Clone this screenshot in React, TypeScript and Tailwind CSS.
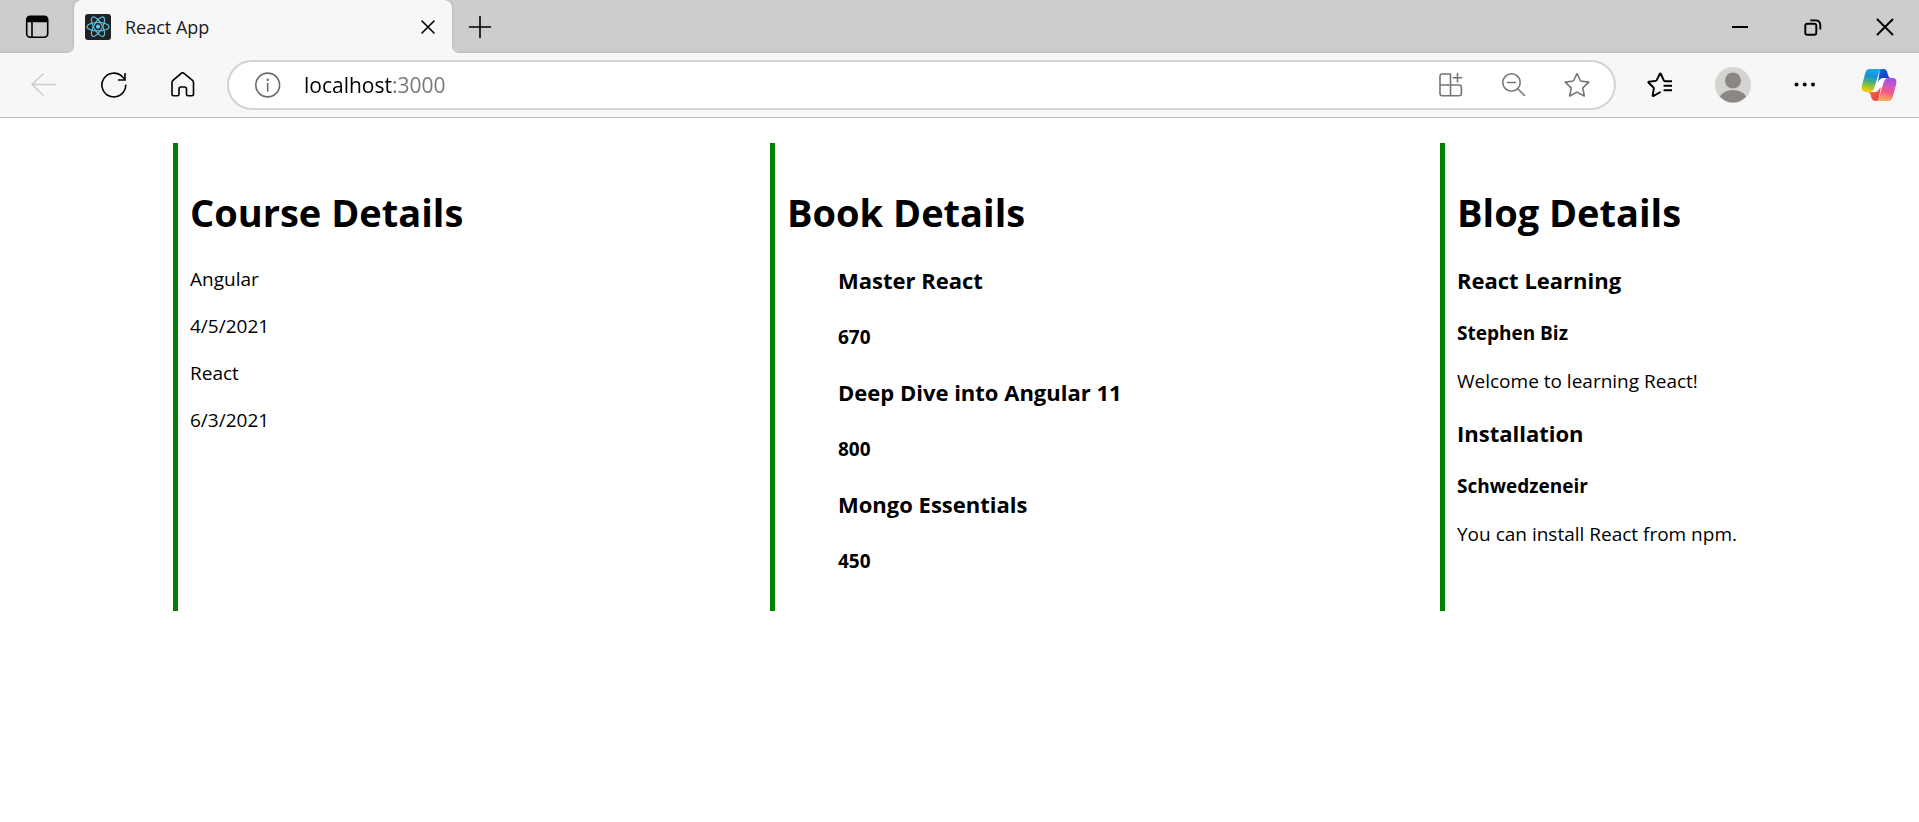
import React from "react";

type IconProps = { className?: string; children: React.ReactNode; size?: number };

function Icon({ className = "size-[26px]", children, size = 26 }: IconProps) {
  return (
    <svg
      className={className}
      viewBox={`0 0 ${size} ${size}`}
      fill="none"
      stroke="currentColor"
      strokeWidth="1.6"
      strokeLinecap="round"
      strokeLinejoin="round"
      aria-hidden="true"
    >
      {children}
    </svg>
  );
}

const courses = [
  { name: "Angular", date: "4/5/2021" },
  { name: "React", date: "6/3/2021" },
];

const books = [
  { name: "Master React", price: 670 },
  { name: "Deep Dive into Angular 11", price: 800 },
  { name: "Mongo Essentials", price: 450 },
];

const blogs = [
  { title: "React Learning", author: "Stephen Biz", text: "Welcome to learning React!" },
  { title: "Installation", author: "Schwedzeneir", text: "You can install React from npm." },
];

function ReactLogo() {
  return (
    <svg className="size-[26px]" viewBox="0 0 26 26" aria-hidden="true">
      <rect width="26" height="26" rx="3" fill="#222222" />
      <g fill="none" stroke="#5cc8e4" strokeWidth="1.1">
        <ellipse cx="13" cy="12.7" rx="11" ry="4.2" />
        <ellipse cx="13" cy="12.7" rx="11" ry="4.2" transform="rotate(60 13 12.7)" />
        <ellipse cx="13" cy="12.7" rx="11" ry="4.2" transform="rotate(120 13 12.7)" />
      </g>
      <circle cx="13" cy="12.7" r="2.1" fill="#5cc8e4" />
    </svg>
  );
}

function CopilotLogo() {
  return (
    <svg className="size-9" viewBox="0 0 36 36" aria-hidden="true">
      <defs>
        <linearGradient id="cp-left" x1="0.55" y1="0" x2="0.4" y2="1">
          <stop offset="0" stopColor="#1fa9f2" />
          <stop offset="0.3" stopColor="#1191dc" />
          <stop offset="0.55" stopColor="#3fae84" />
          <stop offset="0.8" stopColor="#a9c726" />
          <stop offset="1" stopColor="#fccb05" />
        </linearGradient>
        <linearGradient id="cp-right" x1="0.6" y1="0" x2="0.4" y2="1">
          <stop offset="0" stopColor="#a14ee8" />
          <stop offset="0.3" stopColor="#c957c4" />
          <stop offset="0.58" stopColor="#f2588a" />
          <stop offset="1" stopColor="#ffb057" />
        </linearGradient>
        <linearGradient id="cp-top" x1="0" y1="0" x2="1" y2="1">
          <stop offset="0" stopColor="#1668dd" />
          <stop offset="0.6" stopColor="#0d3fca" />
          <stop offset="1" stopColor="#2467e8" />
        </linearGradient>
        <linearGradient id="cp-bottom" x1="0" y1="0" x2="1" y2="1">
          <stop offset="0" stopColor="#f9922f" />
          <stop offset="0.6" stopColor="#ee4f42" />
          <stop offset="1" stopColor="#e2365a" />
        </linearGradient>
      </defs>
      <path d="M19.500 10H25l-7 16H11z" fill="#ffffff" />
      <path d="M19 2h3.500c2 0 3 1 3.600 3l1 3.300c.4 1.600 1.300 2.500 2.900 2.700h-7c-2.300 0-3.700.3-5 2.500L17 16z" fill="url(#cp-top)" />
      <path d="M17 34h-2.500c-2.300 0-3.500-1.200-4.100-3.200l-.9-3C9 26 8 25 6 25h7.200c2.500 0 3.600-.6 4.500-2.500L20 20z" fill="url(#cp-bottom)" />
      <path d="M8.500 2H22c-2.200 0-3.300 1.400-4 3.600L13.500 20c-1 3.400-2.200 5-5.300 5H5C1.200 25 0 22.500 1 18.500L4 7c1-3.500 2-5 4.500-5z" fill="url(#cp-left)" />
      <path d="M27.500 34H14c2.200 0 3.300-1.400 4-3.600L22.500 16c1-3.400 2.200-5 5.300-5h3.500c3.800 0 4.700 2.500 3.800 6.500L32 29c-1 3.500-2 5-4.500 5z" fill="url(#cp-right)" />
    </svg>
  );
}

function TabStrip() {
  return (
    <div className="flex h-[53px] items-stretch overflow-hidden bg-[#cdcdcd] shadow-[inset_0_-2px_2px_-1px_#bababa]">
      <button aria-label="Tab actions menu" className="flex w-[74px] items-center justify-center">
        <Icon>
          <rect x="2.700" y="2.200" width="21" height="21" rx="3.500" />
          <path d="M3.500 4.500Q3.500 3 5 3H21.500q1.500 0 1.500 1.500V7.500H3.500z" fill="currentColor" />
          <path d="M8 7v16" />
        </Icon>
      </button>
      <div className="relative flex w-[378px] items-center rounded-t-lg bg-[#f7f7f7] pr-[14px] pl-[11px] shadow-[0_0_3px_#a8a8a8]">
        <svg className="absolute bottom-0 -left-2 size-2" viewBox="0 0 8 8" aria-hidden="true">
          <path d="M8 0v8H0q8 0 8-8z" fill="#f7f7f7" />
        </svg>
        <svg className="absolute -right-2 bottom-0 size-2" viewBox="0 0 8 8" aria-hidden="true">
          <path d="M0 0v8h8Q0 8 0 0z" fill="#f7f7f7" />
        </svg>
        <ReactLogo />
        <span className="ml-[14px] flex-1 text-[18px] leading-6 text-[#1b1b1b]">React App</span>
        <button aria-label="Close tab">
          <Icon className="size-5" size={20}>
            <path d="M4 4l12 12M16 4L4 16" />
          </Icon>
        </button>
      </div>
      <button aria-label="New tab" className="flex w-14 items-center justify-center">
        <Icon>
          <path d="M13 2.500v21M2.500 13h21" />
        </Icon>
      </button>
      <div className="ml-auto flex items-center gap-12 pr-[22px]">
        <button aria-label="Minimize">
          <Icon className="size-6" size={24}>
            <path d="M3 12h16" strokeWidth="2" strokeLinecap="butt" />
          </Icon>
        </button>
        <button aria-label="Restore">
          <Icon className="size-6" size={24}>
            <rect x="4.300" y="8.800" width="11" height="11" rx="2" strokeWidth="1.900" />
            <path d="M9.300 5.400H14.500q4.800 0 4.800 4.800V14.500" strokeWidth="1.900" strokeLinecap="butt" />
          </Icon>
        </button>
        <button aria-label="Close window">
          <Icon className="size-6" size={24}>
            <path d="M4.500 4.500l15 15M19.500 4.500l-15 15" strokeWidth="1.900" />
          </Icon>
        </button>
      </div>
    </div>
  );
}

function Toolbar() {
  return (
    <div className="flex h-[65px] items-center border-b border-[#bdbdbd] bg-[#f7f7f7] pr-[22px] pl-[31px]">
      <div className="flex gap-11">
        <button aria-label="Back" className="text-[#cccccc]" disabled>
          <Icon>
            <path d="M24.500 12.500H1M12 2L1 12.500 12 23" />
          </Icon>
        </button>
        <button aria-label="Refresh">
          <Icon>
            <path d="M24.700 12.600A11.900 11.900 0 1 1 21.600 5L24 7.500" strokeLinecap="butt" />
            <path d="M24 1v7h-7" strokeLinejoin="miter" strokeLinecap="butt" />
          </Icon>
        </button>
        <button aria-label="Home">
          <Icon>
            <path d="M1 10.500q0-1.300 1-2.100L10.500 1.100q1.100-.9 2.200 0L21.500 8.400q1 .8 1 2.100V22q0 1.700-1.700 1.700H17q-1.500 0-1.500-1.500V17q0-2-2-2H10q-2 0-2 2v5.200q0 1.500-1.500 1.500H2.700Q1 23.700 1 22z" />
          </Icon>
        </button>
      </div>
      <div className="ml-[30px] flex h-[50px] flex-1 items-center rounded-full border-2 border-[#d3d3d3] bg-white pr-6 pl-[26px] text-[#767676]">
        <button aria-label="View site information" className="text-[#6b6b6b]">
          <Icon>
            <circle cx="12.700" cy="13" r="11.900" />
            <path d="M12.700 11.500v7.500" />
            <circle cx="12.700" cy="7.800" r="0.500" />
          </Icon>
        </button>
        <input
          aria-label="Address"
          defaultValue="localhost:3000"
          className="ml-[23px] h-8 min-w-0 flex-1 bg-[linear-gradient(to_right,#000000_88px,#767676_88px)] bg-clip-text text-[21px] text-transparent outline-none"
        />
        <div className="flex gap-[37px]">
          <button aria-label="App available">
            <Icon>
              <path d="M12.500 2H4.200Q2 2 2 4.200V21.500q0 2.200 2.200 2.200h17q2.200 0 2.200-2.200V15.200q0-2.200-2.200-2.200H2M12.500 2v21.700" />
              <path d="M19.500 1.500v8.500M15.200 5.700h8.500" />
            </Icon>
          </button>
          <button aria-label="Zoom">
            <Icon>
              <circle cx="10.500" cy="10.500" r="8.700" />
              <path d="M17 17l6.500 6.500M6.500 10.500h8" />
            </Icon>
          </button>
          <button aria-label="Add this page to favorites">
            <Icon>
              <path d="M13 1.500l3.600 7.500 8.200 1.100-6 5.700 1.500 8.200L13 20.100 5.700 24l1.500-8.200-6-5.700L9.400 9z" />
            </Icon>
          </button>
        </div>
      </div>
      <div className="ml-[30px] flex items-center gap-[43px]">
        <button aria-label="Favorites">
          <Icon>
            <path
              d="M26 9.300H18.700q-.5 0-.8-.6L14.900 2q-.6-1.200-1.200 0L10.900 7.900q-.4.900-1.200 1L3 9.700q-1.100.2-.4 1l4.700 4.600q.7.600.5 1.500L6.700 23.200q-.1 1.200.9.700l6.400-3.700"
              strokeWidth="1.900"
            />
            <path d="M18.300 13.700H26M18.300 18.300H26" strokeWidth="1.900" />
          </Icon>
        </button>
        <button aria-label="Profile">
          <svg className="size-9" viewBox="0 0 36 36" aria-hidden="true">
            <defs>
              <clipPath id="avatar">
                <circle cx="18" cy="18" r="17.500" />
              </clipPath>
            </defs>
            <circle cx="18" cy="18" r="18" fill="#d5d4d1" />
            <g fill="#8b8784" clipPath="url(#avatar)">
              <circle cx="18" cy="13.500" r="8" />
              <ellipse cx="18" cy="33" rx="14" ry="10" />
            </g>
          </svg>
        </button>
        <button aria-label="Settings and more">
          <svg className="size-6" viewBox="0 0 24 24" fill="currentColor" aria-hidden="true">
            <circle cx="2.500" cy="11.500" r="2" />
            <circle cx="10.700" cy="11.500" r="2" />
            <circle cx="19" cy="11.500" r="2" />
          </svg>
        </button>
        <button aria-label="Copilot">
          <CopilotLogo />
        </button>
      </div>
    </div>
  );
}

function Column({ title, children }: { title: string; children: React.ReactNode }) {
  return (
    <section className="border-l-[5px] border-[#008000] pt-[43px] pb-[35px] pl-3">
      <h1 className="mb-[26px] text-[38px] leading-[53px] font-bold">{title}</h1>
      {children}
    </section>
  );
}

export default function App() {
  return (
    <div className="min-h-screen bg-white font-['Segoe_UI','Open_Sans',sans-serif] text-black">
      <header>
        <TabStrip />
        <Toolbar />
      </header>
      <main className="grid grid-cols-[597fr_670fr_479fr] pt-[25px] pl-[173px] text-[19px] leading-[29px]">
        <Column title="Course Details">
          <div className="flex flex-col gap-[18px]">
            {courses.map((course) => (
              <div key={course.name} className="flex flex-col gap-[18px]">
                <p>{course.name}</p>
                <p>{course.date}</p>
              </div>
            ))}
          </div>
        </Column>
        <Column title="Book Details">
          <ul className="flex flex-col gap-[25px] pl-[51px]">
            {books.map((book) => (
              <li key={book.name} className="flex flex-col gap-[27px] font-bold">
                <h3 className="text-[22px] leading-[31px]">{book.name}</h3>
                <h4>{book.price}</h4>
              </li>
            ))}
          </ul>
        </Column>
        <Column title="Blog Details">
          <div className="flex flex-col gap-[22px]">
            {blogs.map((blog) => (
              <article key={blog.title}>
                <h3 className="mb-[23px] text-[22px] leading-[31px] font-bold">{blog.title}</h3>
                <h4 className="mb-[19px] font-bold">{blog.author}</h4>
                <p>{blog.text}</p>
              </article>
            ))}
          </div>
        </Column>
      </main>
    </div>
  );
}
